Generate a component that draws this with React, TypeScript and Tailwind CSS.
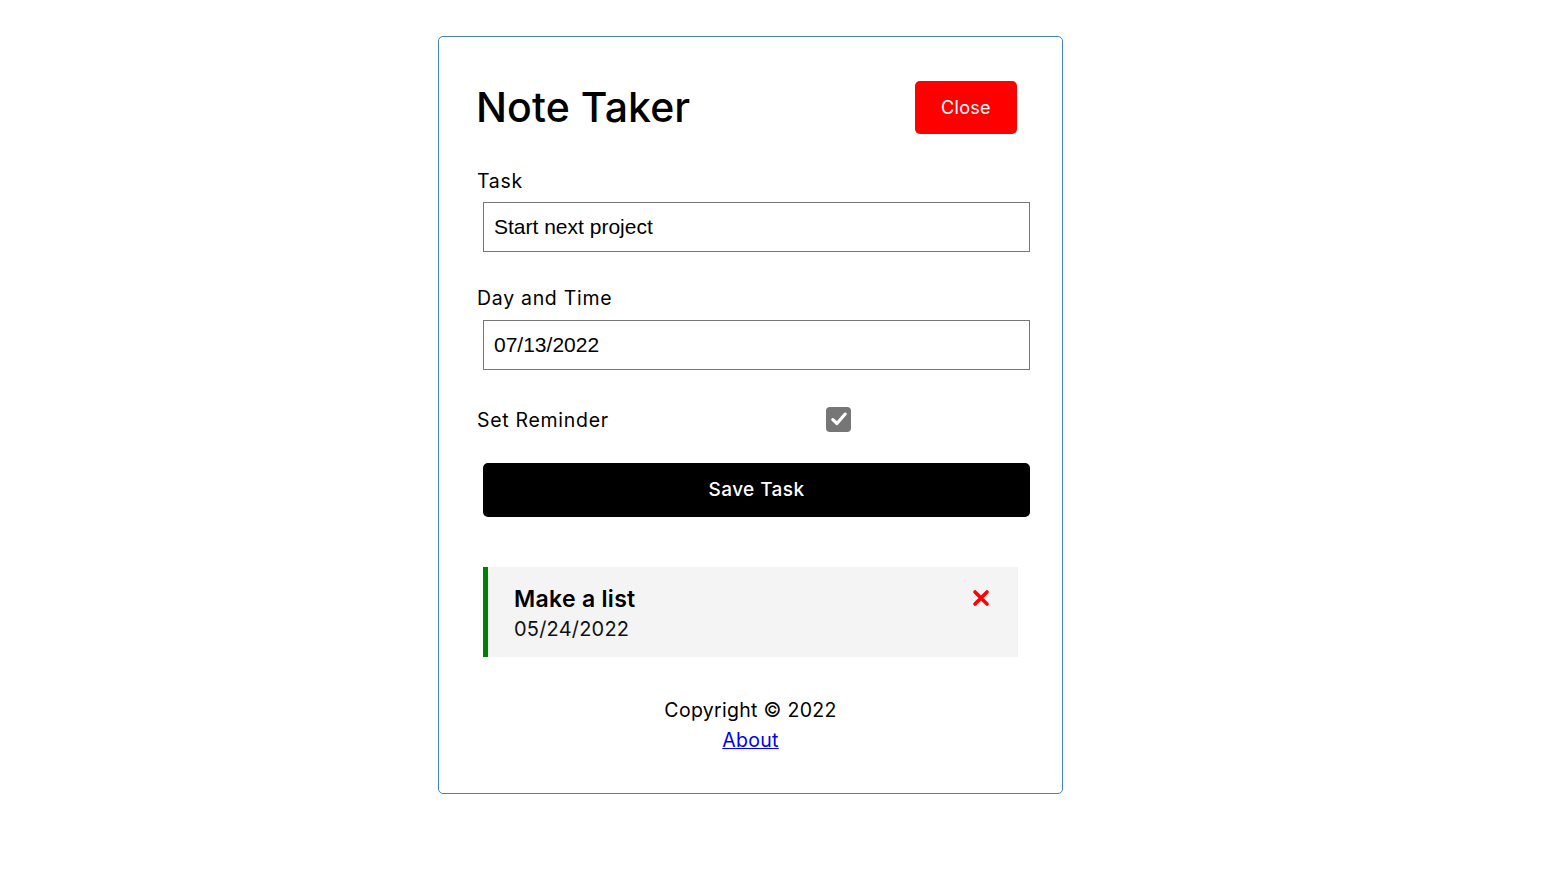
import { useState } from "react";

const font = { fontFamily: "Inter, 'Open Sans', sans-serif" };

function Checkbox({ checked, onToggle }: { checked: boolean; onToggle: () => void }) {
  return (
    <button
      type="button"
      onClick={onToggle}
      className="w-[25px] h-[25px] rounded-[4px] bg-[#767676] flex items-center justify-center"
    >
      {checked && (
        <svg width="18" height="18" viewBox="0 0 16 16">
          <path d="M2.5 8.5 L6.2 12 L13.5 3.6" fill="none" stroke="white" strokeWidth="2.8" strokeLinecap="round" strokeLinejoin="round" />
        </svg>
      )}
    </button>
  );
}

export default function App() {
  const [text, setText] = useState("Start next project");
  const [day, setDay] = useState("07/13/2022");
  const [reminder, setReminder] = useState(true);

  return (
    <div className="min-h-screen bg-white pt-[36px] pl-[438px]" style={font}>
      {/* Card */}
      <div className="w-[625px] h-[758px] border border-[#4682b4] rounded-[5px] pt-[44px] pl-[38px] text-black">
        {/* Header */}
        <header className="w-[540px] h-[53px] flex items-center justify-between">
          <h1 className="text-[41px] font-medium tracking-[0.1px] leading-none -ml-[1px]">Note Taker</h1>
          <button className="w-[102px] h-[53px] rounded-[5px] bg-[#ff0000] text-white text-[18px] tracking-[0.3px]">
            Close
          </button>
        </header>

        {/* Form */}
        <form className="mt-[33px]" onSubmit={(e) => e.preventDefault()}>
          <label className="block text-[19.5px] leading-[28px] tracking-[0.7px]">Task</label>
          <input
            value={text}
            onChange={(e) => setText(e.target.value)}
            className="block mt-[7px] ml-[6px] w-[547px] h-[50px] border border-[#767676] px-[10px] text-[21px] outline-none"
            style={{ fontFamily: "'Liberation Sans', Arial, sans-serif" }}
          />

          <label className="block mt-[32px] text-[19.5px] leading-[28px] tracking-[0.7px]">Day and Time</label>
          <input
            value={day}
            onChange={(e) => setDay(e.target.value)}
            className="block mt-[8px] ml-[6px] w-[547px] h-[50px] border border-[#767676] px-[10px] text-[21px] outline-none"
            style={{ fontFamily: "'Liberation Sans', Arial, sans-serif" }}
          />

          <div className="mt-[35px] h-[28px] flex items-center">
            <label className="w-[349px] pt-[2px] text-[19.5px] leading-[28px] tracking-[0.7px]">Set Reminder</label>
            <Checkbox checked={reminder} onToggle={() => setReminder(!reminder)} />
          </div>

          <button
            type="submit"
            className="block mt-[30px] ml-[6px] w-[547px] h-[54px] rounded-[5px] bg-black text-white text-[19px] font-medium tracking-[0.4px]"
          >
            Save Task
          </button>
        </form>

        {/* Tasks */}
        <div className="mt-[50px] ml-[6px] w-[535px] h-[90px] bg-[#f4f4f4] border-l-[5px] border-[#008000] pl-[26px] pr-[28px] pt-[16px] flex justify-between">
          <div>
            <h3 className="text-[23px] font-semibold leading-[32px] tracking-[0.3px]">Make a list</h3>
            <p className="text-[20px] leading-[29px] text-[#111] tracking-[0.2px]">05/24/2022</p>
          </div>
          <svg width="18" height="18" viewBox="0 0 18 18" className="mt-[6px]">
            <path d="M3 3 L15 15 M15 3 L3 15" stroke="#ff0000" strokeWidth="3.6" strokeLinecap="round" />
          </svg>
        </div>

        {/* Footer */}
        <footer className="mt-[38px] -ml-[38px] text-center text-[19.5px] leading-[30px] tracking-[0.3px]">
          <p>Copyright © 2022</p>
          <a href="#" className="text-[#0000ee] underline">About</a>
        </footer>
      </div>
    </div>
  );
}
